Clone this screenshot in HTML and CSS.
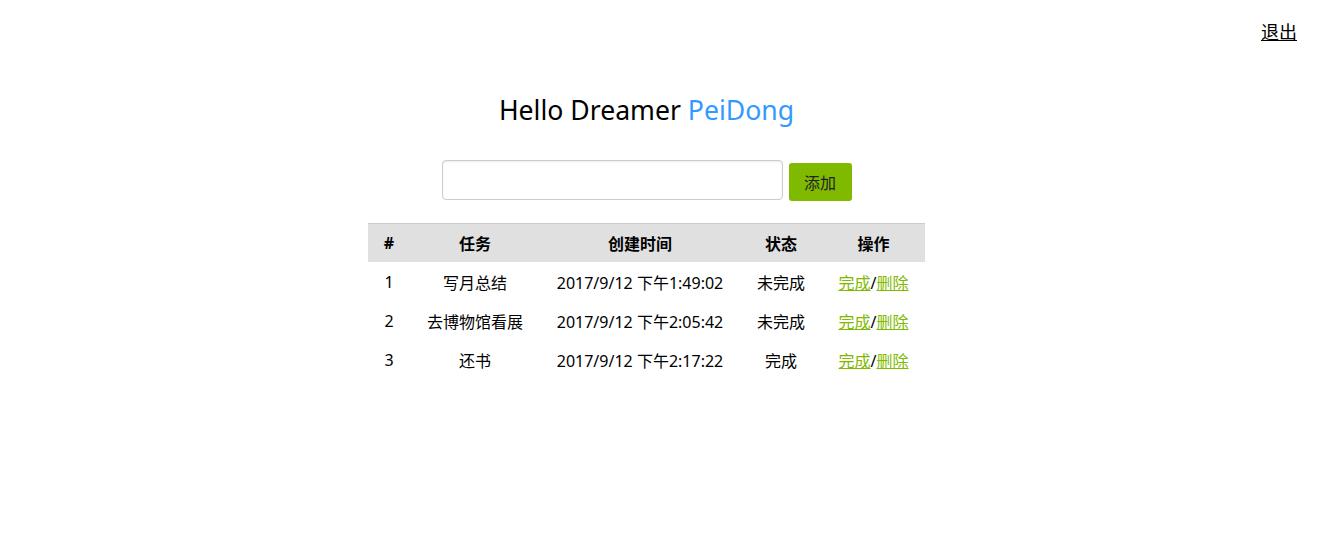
FILE: index.html
```html
<!DOCTYPE html>
<html lang="zh">
<head>
<meta charset="utf-8">
<title>Todo</title>
<link rel="stylesheet" href="styles.css">
</head>
<body>
<header class="topbar">
  <a class="logout" href="#">退出</a>
</header>
<main class="page">
  <h1 class="title">Hello Dreamer <span class="name">PeiDong</span></h1>
  <form class="add-form">
    <input class="add-input" type="text">
    <button class="add-btn" type="button">添加</button>
  </form>
  <table class="tasks">
    <colgroup>
      <col class="c1"><col class="c2"><col class="c3"><col class="c4"><col class="c5">
    </colgroup>
    <thead>
      <tr><th>#</th><th>任务</th><th>创建时间</th><th>状态</th><th>操作</th></tr>
    </thead>
    <tbody>
      <tr><td>1</td><td>写月总结</td><td>2017/9/12 下午1:49:02</td><td>未完成</td><td><a href="#">完成</a>/<a href="#">删除</a></td></tr>
      <tr><td>2</td><td>去博物馆看展</td><td>2017/9/12 下午2:05:42</td><td>未完成</td><td><a href="#">完成</a>/<a href="#">删除</a></td></tr>
      <tr><td>3</td><td>还书</td><td>2017/9/12 下午2:17:22</td><td>完成</td><td><a href="#">完成</a>/<a href="#">删除</a></td></tr>
    </tbody>
  </table>
</main>
</body>
</html>
```
FILE: styles.css
```css
html, body {
  margin: 0;
  padding: 0;
  background: #fff;
  color: #000;
  font-family: "Noto Sans", "Noto Sans CJK SC", sans-serif;
}
.topbar {
  display: flex;
  justify-content: flex-end;
  padding: 18px 31px 0 0;
  height: 32px;
}
.logout {
  color: #000;
  font-size: 18px;
  text-decoration: underline;
  line-height: 28px;
}
.page {
  padding-right: 35px;
  display: flex;
  flex-direction: column;
  align-items: center;
}
.title {
  margin: 40px 0 0;
  font-size: 26.6px;
  font-weight: normal;
  line-height: 40px;
}
.name { color: #3399ff; }
.add-form {
  display: flex;
  align-items: flex-end;
  gap: 6px;
  margin-top: 30px;
}
.add-input {
  box-sizing: border-box;
  width: 341px;
  height: 40px;
  border: 1px solid #ccc;
  border-radius: 4px;
  box-shadow: inset 0 1px 2px rgba(0,0,0,0.08);
  margin: 0;
  padding: 0 8px;
  font-size: 16px;
}
.add-btn {
  box-sizing: border-box;
  width: 63px;
  height: 38px;
  border: none;
  border-radius: 3px;
  background: #7fba00;
  color: #222;
  font-family: "Noto Sans CJK SC", sans-serif;
  font-size: 16px;
  margin: 0 0 -1px;
  padding: 0;
}
.tasks {
  margin-top: 23px;
  width: 557px;
  border-collapse: collapse;
  table-layout: fixed;
  font-size: 16px;
}
.c1 { width: 42px; }
.c2 { width: 130px; }
.c3 { width: 200px; }
.c4 { width: 82px; }
.c5 { width: 103px; }
.tasks thead tr {
  background: #e0e0e0;
  border-top: 1px solid #ccc;
}
.tasks th {
  height: 38px;
  padding: 0;
  font-weight: bold;
  text-align: center;
}
.tasks td {
  height: 39px;
  padding: 0;
  text-align: center;
  white-space: nowrap;
}
.tasks a {
  color: #7fba00;
  text-decoration: underline;
}
```
